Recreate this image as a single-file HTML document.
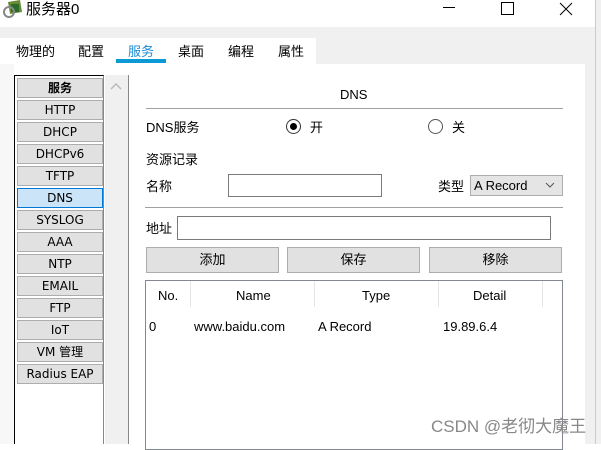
<html><head><style>
body{margin:0;width:601px;height:444px;overflow:hidden;background:#fff;font-family:"Liberation Sans","Noto Sans CJK SC",sans-serif;font-size:13px;line-height:15px;color:#000;position:relative}
.a{position:absolute}
.btn{position:absolute;background:#e1e1e1;border:1px solid #adadad;box-sizing:border-box;text-align:center;line-height:23px}
.li{position:absolute;left:17px;width:86px;height:20px;background:#e1e1e1;border:1px solid #adadad;box-sizing:border-box;text-align:center;line-height:18px;font-family:"DejaVu Sans","Noto Sans CJK SC",sans-serif;font-size:12px}
.inp{position:absolute;border:1px solid #7a7a7a;box-sizing:border-box;background:#fff}
</style></head><body>
<div class="a" style="left:0;top:27px;width:595px;height:11px;background:#f0f0f0"></div>
<div class="a" style="left:316px;top:38px;width:279px;height:26px;background:#f0f0f0"></div>
<div class="a" style="left:585px;top:64px;width:10px;height:380px;background:#f0f0f0"></div>
<div class="a" style="left:0;top:64px;width:14px;height:380px;background:#f7f7f7"></div>
<div class="a" style="left:595px;top:0;width:1px;height:444px;background:#ccc"></div>
<div class="a" style="left:596px;top:0;width:5px;height:444px;background:#f0f0f0"></div>
<svg class="a" style="left:2px;top:0" width="24" height="20"><path d="M6 2 L18 0 L20 12 L8 14Z" fill="#6a8a3a"/><rect x="9" y="4" width="8" height="8" fill="#2a6a2a"/><circle cx="7" cy="12" r="5" fill="none" stroke="#888" stroke-width="2"/></svg>
<div class="a" style="left:26px;top:1px;font-size:15px;line-height:17px">服务器0</div>
<div class="a" style="left:443px;top:7px;width:12px;height:1px;background:#000"></div>
<div class="a" style="left:501px;top:2px;width:11px;height:11px;border:1px solid #000"></div>
<svg class="a" style="left:559px;top:2px" width="14" height="14"><path d="M1 1L13 13M13 1L1 13" stroke="#000"/></svg>
<div class="a" style="left:16px;top:44px">物理的</div>
<div class="a" style="left:78px;top:44px">配置</div>
<div class="a" style="left:128px;top:44px;color:#1a8ad8">服务</div>
<div class="a" style="left:116px;top:59px;width:50px;height:4px;background:#0c9ad6"></div>
<div class="a" style="left:178px;top:44px">桌面</div>
<div class="a" style="left:228px;top:44px">编程</div>
<div class="a" style="left:278px;top:44px">属性</div>
<div class="a" style="left:14px;top:75px;width:90px;height:369px;border:1px solid #000;border-right:1px solid #888;box-sizing:border-box;border-bottom:none"></div>
<div class="a" style="left:105px;top:75px;width:23px;height:369px;background:#f0f0f0;border-right:1px solid #888"></div>
<svg class="a" style="left:110px;top:83px" width="12" height="8"><path d="M1 6L6 1L11 6" fill="none" stroke="#bbb" stroke-width="1.5"/></svg>
<div class="li" style="top:78px;font-weight:bold;font-family:'Noto Sans CJK SC',sans-serif">服务</div>
<div class="li" style="top:100px">HTTP</div>
<div class="li" style="top:122px">DHCP</div>
<div class="li" style="top:144px">DHCPv6</div>
<div class="li" style="top:166px">TFTP</div>
<div class="li" style="top:188px;background:#cce4f7;border-color:#0078d7">DNS</div>
<div class="li" style="top:210px">SYSLOG</div>
<div class="li" style="top:232px">AAA</div>
<div class="li" style="top:254px">NTP</div>
<div class="li" style="top:276px">EMAIL</div>
<div class="li" style="top:298px">FTP</div>
<div class="li" style="top:320px">IoT</div>
<div class="li" style="top:342px">VM 管理</div>
<div class="li" style="top:364px">Radius EAP</div>
<div class="a" style="left:340px;top:87px">DNS</div>
<div class="a" style="left:146px;top:108px;width:417px;height:1px;background:#a0a0a0"></div>
<div class="a" style="left:146px;top:120px">DNS服务</div>
<div class="a" style="left:286px;top:119px;width:15px;height:15px;border:1px solid #333;border-radius:50%;box-sizing:border-box"></div>
<div class="a" style="left:290px;top:123px;width:7px;height:7px;background:#000;border-radius:50%"></div>
<div class="a" style="left:310px;top:120px">开</div>
<div class="a" style="left:428px;top:119px;width:15px;height:15px;border:1px solid #555;border-radius:50%;box-sizing:border-box"></div>
<div class="a" style="left:452px;top:120px">关</div>
<div class="a" style="left:146px;top:152px">资源记录</div>
<div class="a" style="left:146px;top:179px">名称</div>
<div class="inp" style="left:228px;top:174px;width:154px;height:23px"></div>
<div class="a" style="left:438px;top:179px">类型</div>
<div class="a" style="left:470px;top:175px;width:93px;height:21px;background:#e5e5e5;border:1px solid #adadad;box-sizing:border-box;padding-left:3px;line-height:19px">A Record</div>
<svg class="a" style="left:545px;top:182px" width="10" height="6"><path d="M1 1L5 5L9 1" fill="none" stroke="#555"/></svg>
<div class="a" style="left:145px;top:207px;width:418px;height:1px;background:#a0a0a0"></div>
<div class="a" style="left:146px;top:221px">地址</div>
<div class="inp" style="left:177px;top:216px;width:374px;height:24px"></div>
<div class="btn" style="left:146px;top:247px;width:133px;height:26px">添加</div>
<div class="btn" style="left:287px;top:247px;width:133px;height:26px">保存</div>
<div class="btn" style="left:429px;top:247px;width:133px;height:26px">移除</div>
<div class="a" style="left:145px;top:280px;width:418px;height:170px;border:1px solid #828790;box-sizing:border-box"></div>
<div class="a" style="left:190px;top:281px;width:1px;height:26px;background:#e5e5e5"></div>
<div class="a" style="left:314px;top:281px;width:1px;height:26px;background:#e5e5e5"></div>
<div class="a" style="left:438px;top:281px;width:1px;height:26px;background:#e5e5e5"></div>
<div class="a" style="left:542px;top:281px;width:1px;height:26px;background:#e5e5e5"></div>
<div class="a" style="left:158px;top:288px">No.</div>
<div class="a" style="left:236px;top:288px">Name</div>
<div class="a" style="left:362px;top:288px">Type</div>
<div class="a" style="left:473px;top:288px">Detail</div>
<div class="a" style="left:149px;top:319px">0</div>
<div class="a" style="left:194px;top:319px">www.baidu.com</div>
<div class="a" style="left:318px;top:319px">A Record</div>
<div class="a" style="left:443px;top:319px">19.89.6.4</div>
<div class="a" style="left:431px;top:417px;font-size:17px;line-height:19px;color:#888">CSDN @老彻大魔王</div>
</body></html>
